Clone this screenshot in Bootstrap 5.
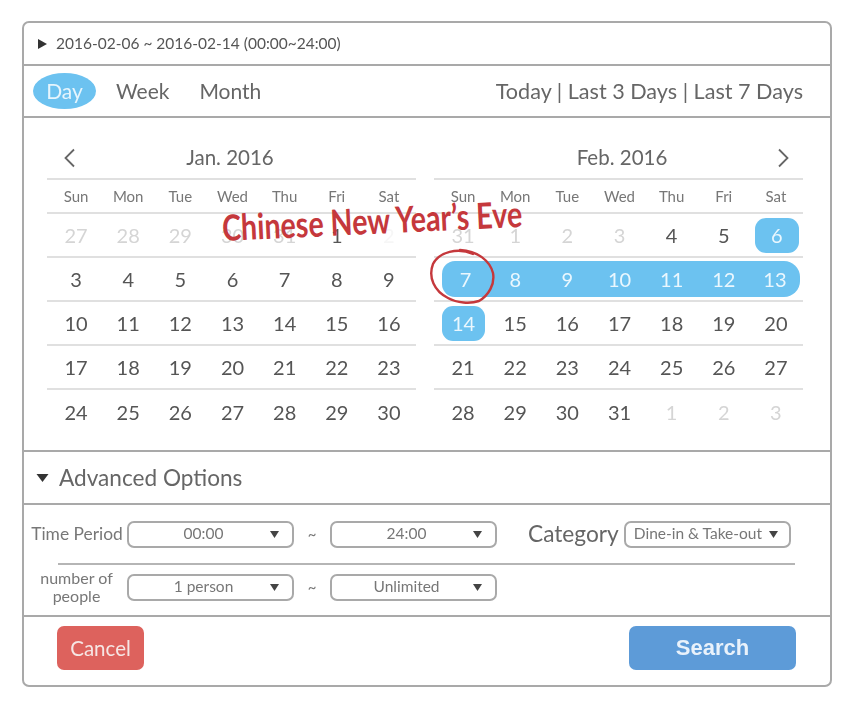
<!DOCTYPE html>
<html lang="en">
<head>
<meta charset="utf-8">
<title>Date search</title>
<link href="https://cdn.jsdelivr.net/npm/bootstrap@5.3.0/dist/css/bootstrap.min.css" rel="stylesheet">
<style>
html,body{background:#fff;margin:0}
body{font-family:"Lato","Liberation Sans",sans-serif;color:#555;position:relative;width:848px;height:704px;overflow:hidden}
.panel{position:absolute;left:22px;top:21px;width:810px;height:666px;border:2px solid #a9a9a9;border-radius:7px;filter:blur(.5px)}
.sect{border-bottom:2px solid #a9a9a9;flex:none}
.s-sum{height:43px;padding-left:13px;font-size:15.5px;color:#555}
.s-tabs{height:52px;padding:0 27px 0 9px;font-size:21px;color:#666}
.s-cal{height:334px;padding:19px 0 0 23px;gap:18px}
.s-adv{height:53px;padding-left:12px;font-size:22.6px;color:#666}
.adv-text{margin-left:2px}
.s-form{height:112px;padding:12px 0 0 2px}
.s-foot{flex:1;padding:9px 34px 0 33px}
.tab-on{width:63px;height:36px;border-radius:50%;background:#6cc2f0;color:#e6f5fd;margin-right:20px}
.tab-off{margin-right:30px}
.tab-links{font-size:21.6px}
.month{width:369px}
.mhead{height:43px;padding:0 13px 0 16px;font-size:20.5px;color:#666;border-bottom:2px solid #e0e0e0}
.sp-l{width:20px}
.sp-r{width:18px}
.wk{display:grid;grid-template-columns:repeat(7,1fr);padding:0 1px 0 3px;align-items:center;text-align:center;height:44px;border-bottom:2px solid #e0e0e0;font-size:20px;color:#555}
.wk:last-child{border-bottom:0}
.wk.names{height:34px;font-size:15px;color:#777}
.off{color:#d5d5d5}
.erased{color:#f6f6f6}
.chip{background:#6cc2f0;color:#eaf7fe;height:35px;line-height:35px;border-radius:11px}
.chip-a{margin:0 4px 0 5px}
.chip-b{margin:0 3px 0 5px}
.rng{background:#6cc2f0;color:#eaf7fe;height:36px;line-height:36px}
.rng-s{margin-left:5px;border-radius:13px 0 0 13px}
.rng-e{margin-right:2px;border-radius:0 16px 16px 0}
.flabel{width:101px;text-align:center;font-size:17.4px;color:#777;line-height:18px;padding-left:1px}
.flabel.sm{font-size:16px;padding-left:0}
.dd{height:27px;border:2px solid #a9a9a9;border-radius:7px;width:167px;position:relative;font-size:15.5px;color:#777;padding-right:14px}
.dd svg{position:absolute;right:13px;top:8px}
.tilde{width:36px;text-align:center;color:#777;font-size:15px}
.rule{height:2px;background:#b5b5b5;margin:12px 35px 4px 32px}
.cat{font-size:22.7px;color:#666;margin:0 5px 0 31px}
.dd.catdd{font-size:15.5px;padding-right:0;justify-content:flex-start!important;padding-left:8px}
.dd.catdd svg{right:11px}
.act{height:44px;border:0;border-radius:7px;color:#f6e6e4;padding:0}
.act-c{width:87px;background:#dd625d;font-size:20.5px}
.act-s{width:167px;background:#5d9bd8;color:#e9f2fb;font:700 22px "Liberation Sans",sans-serif}
.note{position:absolute;left:222px;top:207px;font:700 36px/40px "Lato","Liberation Sans",sans-serif;color:#c5383c;transform:rotate(-2.7deg) scaleX(.795);transform-origin:left center;white-space:nowrap}
.ring{position:absolute;left:426px;top:245px}
</style>
</head>
<body>
<div class="panel d-flex flex-column">
  <div class="sect s-sum d-flex align-items-center gap-2">
    <svg width="11" height="12" viewBox="0 0 11 12"><path d="M1 1l9 5-9 5z" fill="#333"/></svg>
    <span>2016-02-06 ~ 2016-02-14 (00:00~24:00)</span>
  </div>
  <div class="sect s-tabs d-flex align-items-center">
    <span class="tab-on d-flex align-items-center justify-content-center">Day</span>
    <span class="tab-off">Week</span>
    <span class="tab-off">Month</span>
    <span class="ms-auto tab-links">Today | Last 3 Days | Last 7 Days</span>
  </div>
  <div class="sect s-cal d-flex">
    <div class="month">
      <div class="mhead d-flex align-items-center justify-content-between">
        <svg width="14" height="20" viewBox="0 0 14 20"><path d="M11 1.5L2.5 10l8.500 8.500" fill="none" stroke="#666" stroke-width="1.800"/></svg>
        <span>Jan. 2016</span>
        <span class="sp-l"></span>
      </div>
      <div class="wk names"><span>Sun</span><span>Mon</span><span>Tue</span><span>Wed</span><span>Thu</span><span>Fri</span><span>Sat</span></div>
      <div class="wk"><span class="off">27</span><span class="off">28</span><span class="off">29</span><span class="off">30</span><span class="off">31</span><span>1</span><span class="erased">2</span></div>
      <div class="wk"><span>3</span><span>4</span><span>5</span><span>6</span><span>7</span><span>8</span><span>9</span></div>
      <div class="wk"><span>10</span><span>11</span><span>12</span><span>13</span><span>14</span><span>15</span><span>16</span></div>
      <div class="wk"><span>17</span><span>18</span><span>19</span><span>20</span><span>21</span><span>22</span><span>23</span></div>
      <div class="wk"><span>24</span><span>25</span><span>26</span><span>27</span><span>28</span><span>29</span><span>30</span></div>
    </div>
    <div class="month">
      <div class="mhead d-flex align-items-center justify-content-between">
        <span class="sp-r"></span>
        <span>Feb. 2016</span>
        <svg width="14" height="20" viewBox="0 0 14 20"><path d="M3 1.500L11.500 10 3 18.500" fill="none" stroke="#666" stroke-width="1.800"/></svg>
      </div>
      <div class="wk names"><span>Sun</span><span>Mon</span><span>Tue</span><span>Wed</span><span>Thu</span><span>Fri</span><span>Sat</span></div>
      <div class="wk"><span class="off">31</span><span class="off">1</span><span class="off">2</span><span class="off">3</span><span>4</span><span>5</span><span class="chip chip-b">6</span></div>
      <div class="wk"><span class="rng rng-s">7</span><span class="rng">8</span><span class="rng">9</span><span class="rng">10</span><span class="rng">11</span><span class="rng">12</span><span class="rng rng-e">13</span></div>
      <div class="wk"><span class="chip chip-a">14</span><span>15</span><span>16</span><span>17</span><span>18</span><span>19</span><span>20</span></div>
      <div class="wk"><span>21</span><span>22</span><span>23</span><span>24</span><span>25</span><span>26</span><span>27</span></div>
      <div class="wk"><span>28</span><span>29</span><span>30</span><span>31</span><span class="off">1</span><span class="off">2</span><span class="off">3</span></div>
    </div>
  </div>
  <div class="sect s-adv d-flex align-items-center gap-2">
    <svg width="13" height="10" viewBox="0 0 13 10"><path d="M0.500 1h12L6.500 9z" fill="#333"/></svg>
    <span class="adv-text">Advanced Options</span>
  </div>
  <div class="sect s-form">
    <div class="d-flex align-items-center">
      <span class="flabel">Time Period</span>
      <div class="dd d-flex align-items-center justify-content-center">00:00<svg width="9" height="7" viewBox="0 0 9 7"><path d="M0 0h9L4.500 7z" fill="#444"/></svg></div>
      <span class="tilde">~</span>
      <div class="dd d-flex align-items-center justify-content-center">24:00<svg width="9" height="7" viewBox="0 0 9 7"><path d="M0 0h9L4.500 7z" fill="#444"/></svg></div>
      <span class="cat">Category</span>
      <div class="dd catdd d-flex align-items-center">Dine-in &amp; Take-out<svg width="9" height="7" viewBox="0 0 9 7"><path d="M0 0h9L4.500 7z" fill="#444"/></svg></div>
    </div>
    <div class="rule"></div>
    <div class="d-flex align-items-center">
      <span class="flabel sm">number of<br>people</span>
      <div class="dd d-flex align-items-center justify-content-center">1 person<svg width="9" height="7" viewBox="0 0 9 7"><path d="M0 0h9L4.500 7z" fill="#444"/></svg></div>
      <span class="tilde">~</span>
      <div class="dd d-flex align-items-center justify-content-center">Unlimited<svg width="9" height="7" viewBox="0 0 9 7"><path d="M0 0h9L4.500 7z" fill="#444"/></svg></div>
    </div>
  </div>
  <div class="s-foot d-flex justify-content-between align-items-start">
    <button type="button" class="btn act act-c">Cancel</button>
    <button type="button" class="btn act act-s">Search</button>
  </div>
</div>
<div class="note">Chinese New Year’s Eve</div>
<svg class="ring" width="74" height="66" viewBox="0 0 74 66"><path d="M47 9C32 2 13 7 7 19 2 32 8 46 22 53c9 5 22 6 31 3 10-6 16-17 14-28C64 16 52 6 34 5" fill="none" stroke="#c5383c" stroke-width="2.400" stroke-linecap="round"/></svg>
</body>
</html>
